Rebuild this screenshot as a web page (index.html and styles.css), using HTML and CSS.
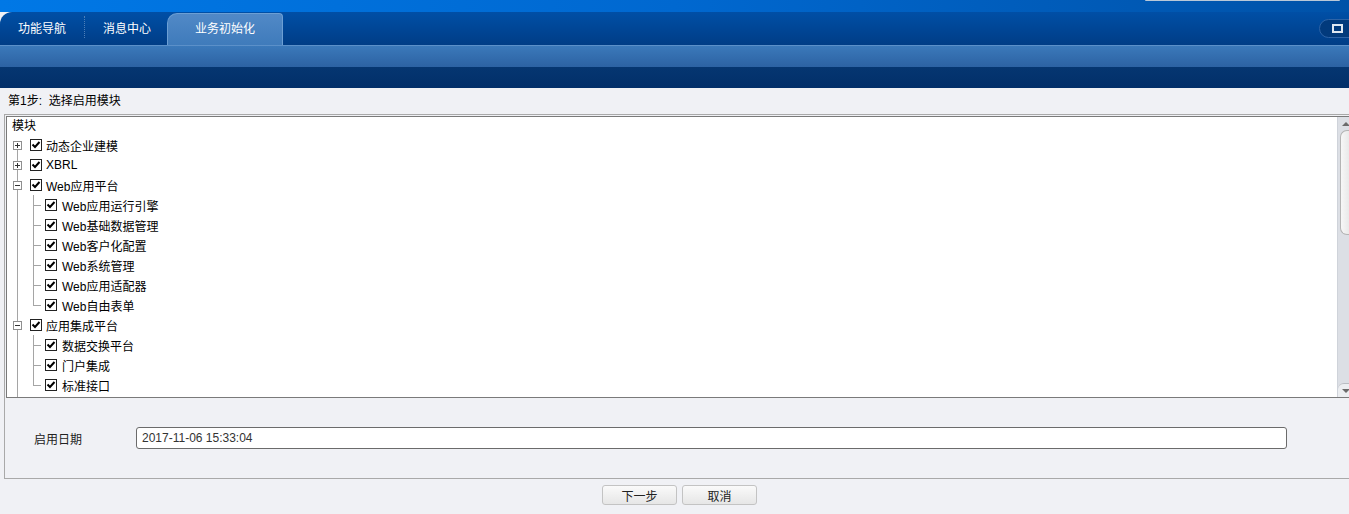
FILE: index.html
```html
<!DOCTYPE html>
<html lang="zh-CN">
<head>
    <meta charset="UTF-8">
    <title>业务初始化</title>
    <link rel="stylesheet" href="styles.css">
</head>
<body>
    <div class="topstrip"><div class="search-edge"></div></div>
    <div class="tabbar">
        <div class="tab first">功能导航</div>
        <div class="tab-sep"></div>
        <div class="tab">消息中心</div>
        <div class="tab active">业务初始化</div>
        <div class="spacer"></div>
        <div class="winbtn"><span></span></div>
    </div>
    <div class="band"></div>
    <div class="band-dark"></div>

    <div class="step">第1步:&nbsp; 选择启用模块</div>

    <div class="panel">
        <div class="tree-box">
            <div class="tree">
                <div class="tree-head">模块</div>

                <div class="row top">
                    <span class="cell exp first"><i class="plus"></i></span>
                    <span class="chk"></span><span class="txt">动态企业建模</span>
                </div>
                <div class="row top">
                    <span class="cell exp"><i class="plus"></i></span>
                    <span class="chk"></span><span class="txt">XBRL</span>
                </div>
                <div class="row top">
                    <span class="cell exp"><i class="minus"></i></span>
                    <span class="chk"></span><span class="txt">Web应用平台</span>
                </div>
                <div class="row child">
                    <span class="cell line"></span><span class="cell2 tee"></span>
                    <span class="chk"></span><span class="txt">Web应用运行引擎</span>
                </div>
                <div class="row child">
                    <span class="cell line"></span><span class="cell2 tee"></span>
                    <span class="chk"></span><span class="txt">Web基础数据管理</span>
                </div>
                <div class="row child">
                    <span class="cell line"></span><span class="cell2 tee"></span>
                    <span class="chk"></span><span class="txt">Web客户化配置</span>
                </div>
                <div class="row child">
                    <span class="cell line"></span><span class="cell2 tee"></span>
                    <span class="chk"></span><span class="txt">Web系统管理</span>
                </div>
                <div class="row child">
                    <span class="cell line"></span><span class="cell2 tee"></span>
                    <span class="chk"></span><span class="txt">Web应用适配器</span>
                </div>
                <div class="row child">
                    <span class="cell line"></span><span class="cell2 end"></span>
                    <span class="chk"></span><span class="txt">Web自由表单</span>
                </div>
                <div class="row top">
                    <span class="cell exp"><i class="minus"></i></span>
                    <span class="chk"></span><span class="txt">应用集成平台</span>
                </div>
                <div class="row child">
                    <span class="cell line"></span><span class="cell2 tee"></span>
                    <span class="chk"></span><span class="txt">数据交换平台</span>
                </div>
                <div class="row child">
                    <span class="cell line"></span><span class="cell2 tee"></span>
                    <span class="chk"></span><span class="txt">门户集成</span>
                </div>
                <div class="row child">
                    <span class="cell line"></span><span class="cell2 end"></span>
                    <span class="chk"></span><span class="txt">标准接口</span>
                </div>
                <div class="row tail"><span class="cell line"></span></div>
            </div>
            <div class="vscroll">
                <div class="arrow up"></div>
                <div class="thumb"></div>
                <div class="track"></div>
                <div class="arrow down"></div>
            </div>
        </div>

        <div class="date-row">
            <span class="date-label">启用日期</span>
            <div class="date-input">2017-11-06 15:33:04</div>
        </div>
    </div>

    <div class="actions">
        <button class="btn">下一步</button>
        <button class="btn">取消</button>
    </div>
</body>
</html>
```

FILE: styles.css
```css
body {
    margin: 0;
    font: 12px "Liberation Sans", "Noto Sans CJK SC", sans-serif;
    color: #000;
    background: #f0f1f5;
    overflow: hidden;
}

/* cabecera azul */
.topstrip {
    height: 12px;
    background: linear-gradient(to right, #0078e6, #0068d0 50%, #0052a8);
    display: flex;
    justify-content: flex-end;
}
.search-edge {
    width: 195px;
    height: 1px;
    margin-right: 9px;
    background: #b9c8d8;
    border-radius: 0 0 3px 3px;
}
.tabbar {
    height: 33px;
    display: flex;
    align-items: flex-end;
    background: linear-gradient(#004fa6, #003d86);
    border-top-left-radius: 12px;
    color: #fff;
}
.tab {
    height: 31px;
    line-height: 31px;
    padding: 0 16px 0 18px;
    flex: none;
}
.tab.first {
    padding-right: 18px;
}
.tab-sep {
    width: 0;
    height: 22px;
    margin-bottom: 7px;
    border-left: 1px dotted #4d7fb8;
}
.tab.active {
    width: 114px;
    padding: 0 4px 0 0;
    box-sizing: content-box;
    text-align: center;
    background: linear-gradient(#5189c7, #3f7bbb);
    border: 1px solid #6c9fd4;
    border-bottom: none;
    border-radius: 10px 4px 0 0;
}
.tab.active {
    width: 110px;
    padding: 0 2px 0 2px;
}
.spacer {
    flex: 1;
}
.winbtn {
    width: 38px;
    height: 19px;
    flex: none;
    margin-bottom: 7px;
    margin-right: -8px;
    border: 1px solid #2d63a6;
    border-radius: 10px 0 0 10px;
    background: #023a7c;
    display: flex;
    align-items: center;
    padding-left: 12px;
    box-sizing: border-box;
}
.winbtn span {
    width: 11px;
    height: 9px;
    border: 2px solid #dfe7f1;
    box-sizing: border-box;
}
.band {
    height: 22px;
    background: linear-gradient(#3b79ba, #2c62a3);
    border-top: 1px solid #5b90c9;
    box-sizing: border-box;
}
.band-dark {
    height: 21px;
    background: linear-gradient(#053671, #022f69);
}

.step {
    height: 26px;
    line-height: 26px;
    padding-left: 8px;
}

/* panel principal */
.panel {
    margin: 0 -4px 0 4px;
    border: 1px solid #a9a9a9;
    border-right: none;
    padding: 1px 0 0 1px;
}
.tree-box {
    height: 282px;
    border: 1px solid #7a7a7a;
    border-right: none;
    background: #fff;
    display: flex;
    box-sizing: border-box;
}
.tree {
    flex: 1;
    overflow: hidden;
}
.tree-head {
    height: 18px;
    line-height: 18px;
    padding-left: 5px;
}
.row {
    height: 20px;
    display: flex;
    align-items: center;
}
.cell {
    width: 22px;
    height: 20px;
    flex: none;
    display: flex;
    align-items: center;
    background: linear-gradient(#a5a5a5, #a5a5a5) 10px 0 / 1px 100% no-repeat;
}
.cell.exp.first {
    background: linear-gradient(#a5a5a5, #a5a5a5) 10px 10px / 1px 10px no-repeat;
}
.cell i {
    width: 9px;
    height: 9px;
    margin-left: 6px;
    border: 1px solid #8f8f8f;
    box-sizing: border-box;
    background: #fff;
    display: flex;
    align-items: center;
    justify-content: center;
    position: relative;
}
.cell i::before {
    content: "";
    width: 5px;
    height: 1px;
    background: #333;
}
.cell i.plus::after {
    content: "";
    position: absolute;
    width: 1px;
    height: 5px;
    background: #333;
}
.cell2 {
    width: 16px;
    height: 20px;
    flex: none;
}
.cell2.tee {
    background:
        linear-gradient(#a5a5a5, #a5a5a5) 4px 0 / 1px 100% no-repeat,
        linear-gradient(#a5a5a5, #a5a5a5) 4px 10px / 8px 1px no-repeat;
}
.cell2.end {
    background:
        linear-gradient(#a5a5a5, #a5a5a5) 4px 0 / 1px 11px no-repeat,
        linear-gradient(#a5a5a5, #a5a5a5) 4px 10px / 8px 1px no-repeat;
}
.chk {
    width: 12px;
    height: 12px;
    flex: none;
    border: 1px solid #222;
    box-sizing: border-box;
    background: #fff url("data:image/svg+xml,%3Csvg xmlns='http://www.w3.org/2000/svg' width='10' height='10'%3E%3Cpath d='M1.5 4.5 L4 7 L8.5 2' fill='none' stroke='%23000' stroke-width='2'/%3E%3C/svg%3E") center / 10px 10px no-repeat;
}
.row.top .chk {
    margin-left: 1px;
}
.row.top .txt {
    margin-left: 4px;
}
.row.child .txt {
    margin-left: 5px;
}

/* barra de desplazamiento */
.vscroll {
    width: 15px;
    flex: none;
    display: flex;
    flex-direction: column;
    background: #dcdfe5;
    border-left: 1px solid #cfd3da;
}
.arrow {
    height: 13px;
    display: flex;
    align-items: center;
    justify-content: center;
}
.arrow::before {
    content: "";
    border-left: 4px solid transparent;
    border-right: 4px solid transparent;
}
.arrow.up::before {
    border-bottom: 4px solid #6b6b6b;
}
.arrow.down {
    border-top: 1px solid #b9bcc2;
    border-radius: 6px 0 0 0;
    background: #eceef1;
}
.arrow.down::before {
    border-top: 4px solid #6b6b6b;
}
.thumb {
    height: 103px;
    margin-left: 2px;
    border: 1px solid #b4b4b4;
    border-right: none;
    border-radius: 7px 0 0 7px;
    background: linear-gradient(to right, #f7f7f7, #e2e2e2);
}
.track {
    flex: 1;
}

/* fecha */
.date-row {
    height: 80px;
    display: flex;
    align-items: center;
    padding-left: 28px;
}
.date-label {
    width: 102px;
    color: #222;
}
.date-input {
    width: 1151px;
    height: 22px;
    line-height: 20px;
    padding-left: 5px;
    box-sizing: border-box;
    border: 1px solid #6b6b6b;
    border-radius: 3px;
    background: #fff;
    color: #333;
}

.actions {
    display: flex;
    justify-content: center;
    gap: 5px;
    padding: 6px 0 0 10px;
}
.btn {
    width: 75px;
    height: 20px;
    padding: 0;
    font: inherit;
    color: #222;
    border: 1px solid #c3c3c3;
    border-radius: 3px;
    background: linear-gradient(#fafafa, #e6e6e6);
}
```
